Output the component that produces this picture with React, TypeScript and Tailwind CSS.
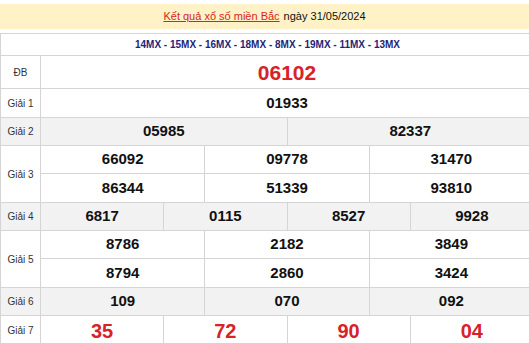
import React from "react";

const font = { fontFamily: '"Liberation Sans", Arial, sans-serif' };

type RowProps = {
  label: string;
  lines: string[][];
  gray?: boolean;
  heights: string[];
  numClass: string;
};

function Row({ label, lines, gray, heights, numClass }: RowProps) {
  return (
    <div className={`flex ${gray ? "bg-[#f2f2f2]" : "bg-white"}`}>
      <div className="w-[40px] shrink-0 flex items-center justify-center border-r border-b border-[#d5d5d5] text-[10px] text-[#333]">
        {label}
      </div>
      <div className="flex-1 flex flex-col">
        {lines.map((nums, i) => (
          <div key={i} className={`flex ${heights[i]}`}>
            {nums.map((n, j) => (
              <div
                key={j}
                className={`flex-1 flex items-center justify-center border-r border-b border-[#d5d5d5] font-bold ${numClass}`}
              >
                {n}
              </div>
            ))}
          </div>
        ))}
      </div>
    </div>
  );
}

export default function App() {
  return (
    <div className="w-[529px] h-[343px] overflow-hidden bg-white" style={font}>
      <div className="mt-[4px] h-[25px] bg-[#fef2c6] flex items-center justify-center text-[11px]">
        <span className="text-[#d9241b] underline">Kết quả xổ số miền Bắc</span>
        <span className="ml-[4px] text-[#111]">ngày 31/05/2024</span>
      </div>
      <div className="mt-[4px] w-[534px] border-t border-l border-[#d5d5d5]">
        <div className="h-[22px] flex items-center justify-center border-r border-b border-[#d5d5d5] text-[10px] font-bold text-[#1f2478] pl-[1px]">
          14MX - 15MX - 16MX - 18MX - 8MX - 19MX - 11MX - 13MX
        </div>
        <Row label="ĐB" lines={[["06102"]]} heights={["h-[33px]"]} numClass="text-[21px] text-[#d7222a] pt-[1px]" />
        <Row label="Giải 1" lines={[["01933"]]} heights={["h-[29px]"]} numClass="text-[15px] text-[#111]" />
        <Row label="Giải 2" gray lines={[["05985", "82337"]]} heights={["h-[28px]"]} numClass="text-[15px] text-[#111]" />
        <Row
          label="Giải 3"
          lines={[
            ["66092", "09778", "31470"],
            ["86344", "51339", "93810"],
          ]}
          heights={["h-[28px]", "h-[29px]"]}
          numClass="text-[15px] text-[#111]"
        />
        <Row label="Giải 4" gray lines={[["6817", "0115", "8527", "9928"]]} heights={["h-[28px]"]} numClass="text-[15px] text-[#111]" />
        <Row
          label="Giải 5"
          lines={[
            ["8786", "2182", "3849"],
            ["8794", "2860", "3424"],
          ]}
          heights={["h-[28px]", "h-[29px]"]}
          numClass="text-[15px] text-[#111]"
        />
        <Row label="Giải 6" gray lines={[["109", "070", "092"]]} heights={["h-[28px]"]} numClass="text-[15px] text-[#111]" />
        <Row label="Giải 7" lines={[["35", "72", "90", "04"]]} heights={["h-[30px]"]} numClass="text-[20px] text-[#d7222a]" />
      </div>
    </div>
  );
}
